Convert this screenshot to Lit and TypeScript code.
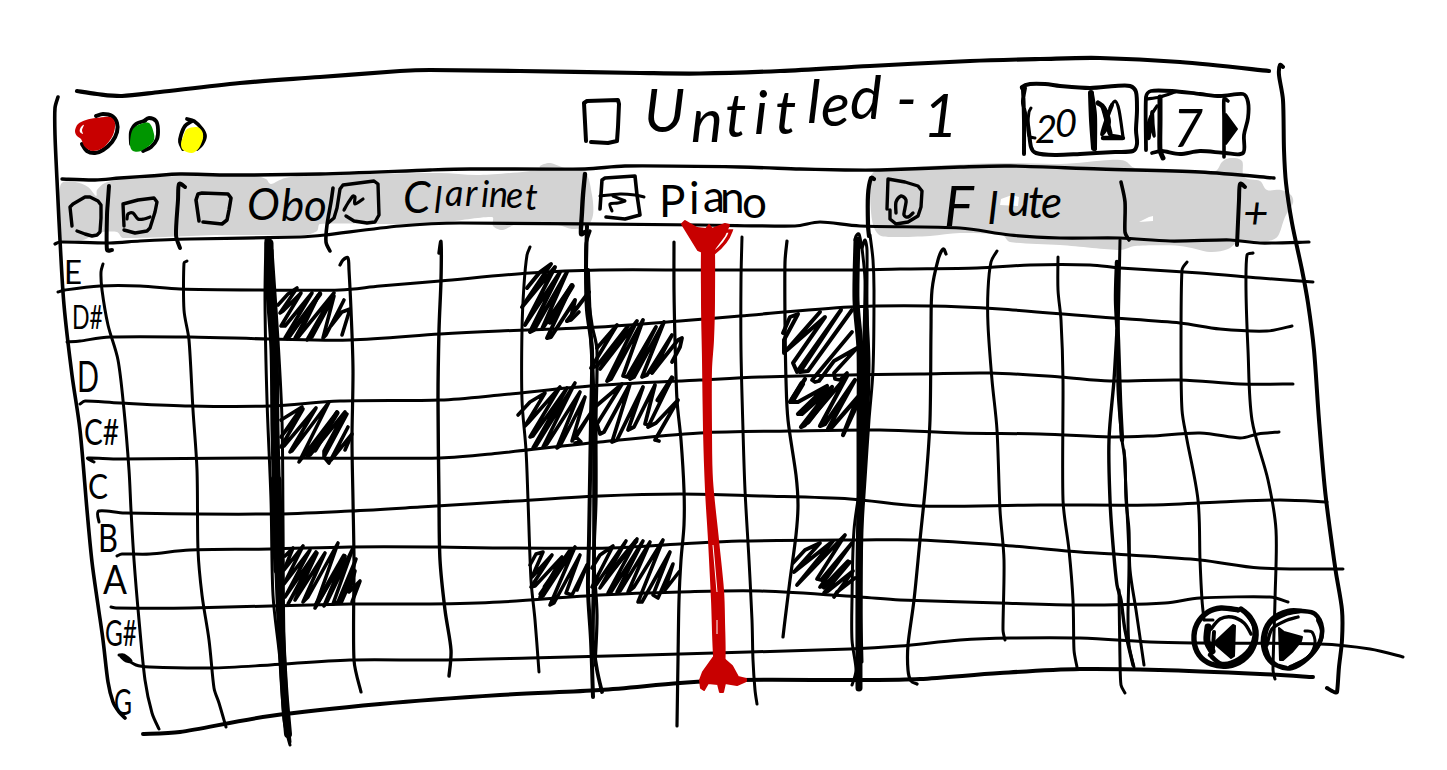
import { LitElement, html, svg, css } from "lit";
import { customElement } from "lit/decorators.js";

type Stroke = [width: number, points: string];

const parse = (points: string): number[][] =>
  points.trim().split(/\s+/).map((p) => p.split(",").map(Number));

/** Smooth pen stroke running through every listed point. */
const curve = (points: string, closed = false): string => {
  const p = parse(points);
  const n = p.length;
  const at = (i: number) => (closed ? p[(i + n) % n] : p[Math.max(0, Math.min(n - 1, i))]);
  let d = `M${p[0][0]} ${p[0][1]}`;
  for (let i = 0; i < (closed ? n : n - 1); i++) {
    const [a, b, c, e] = [at(i - 1), at(i), at(i + 1), at(i + 2)];
    const seg = Math.hypot(c[0] - b[0], c[1] - b[1]);
    const k1 = Math.min(1 / 6, seg / 3 / (Math.hypot(c[0] - a[0], c[1] - a[1]) || 1));
    const k2 = Math.min(1 / 6, seg / 3 / (Math.hypot(e[0] - b[0], e[1] - b[1]) || 1));
    d += `C${b[0] + (c[0] - a[0]) * k1} ${b[1] + (c[1] - a[1]) * k1} ${c[0] - (e[0] - b[0]) * k2} ${c[1] - (e[1] - b[1]) * k2} ${c[0]} ${c[1]}`;
  }
  return closed ? d + "Z" : d;
};

const ink = (strokes: Stroke[]) =>
  strokes.map(([w, p]) => svg`<path class="ink" stroke-width=${w} d=${curve(p)}></path>`);
const blob = (cls: string, points: string) => svg`<path class=${cls} d=${curve(points, true)}></path>`;
const straight = (w: number, points: string) =>
  svg`<polyline class="ink" stroke-width=${w} points=${points}></polyline>`;

const sheet = css`
  :host { display: block; }
  svg { display: block; width: 100%; height: 100%; overflow: visible; }
  .ink { fill: none; stroke: #000; stroke-linecap: round; stroke-linejoin: round; }
  .solid { fill: #000; stroke: #000; stroke-width: 2; stroke-linejoin: round; }
  .wash { fill: #d3d3d3; }
  .paper { fill: #fff; }
  text { font-family: Lato, "Liberation Sans", sans-serif; fill: #000; }
`;

@customElement("title-bar")
class TitleBar extends LitElement {
  static styles = [sheet, css`
    .red { fill: #c80000; }
    .green { fill: #009600; }
    .yellow { fill: #ff0; }
    .title { font-size: 60px; font-style: italic; }
    .number { font-size: 38px; font-style: italic; }
    .seven { font-size: 52px; font-style: italic; }
  `];
  render() {
    return html`<svg viewBox="0 0 1447 160">
      ${ink([
        [4.2, "77,91 97,94 122,96 160,92 240,83 320,77 400,71 430,70 520,71 640,73 700,73.5 780,71 870,66 970,61 1040,59 1100,58 1180,62 1269,71"],
        [4, "96,116 103,114 112,116 117,123 117,132 112,142 103,150 95,153 87,151 82,144"],
        [4, "84,126 81,131 84,136"],
        [3.8, "131,144 131,132 136,124 145,121"],
        [3.8, "144,121 149,118 156,121 158,129 157,139 151,147 143,151"],
        [3.8, "187,119 194,121 202,129 205,136 202,144 197,149"],
        [3.8, "192,121 185,126 181,135 180,142 183,149"],
      ])}
      ${blob("red", "75,131 78,124 86,120 96,118 110,117 115,123 113,135 104,147 93,151 85,147 81,139 77,136")}
      ${blob("paper", "82,126 84,125 82,130 83,134 80,132 80,129")}
      ${blob("green", "132,131 138,125 149,123 154,134 153,142 141,151 133,151 130,145")}
      ${blob("yellow", "183,137 187,129 197,127 202,131 203,138 199,148 192,153 183,150 181,144")}
      ${straight(4, "586,141 584,103 587,101 618,100 619,104 618,127 617,141 608,143 591,142")}
      <text class="title" x="644 691 725 754 775 807 821 850 896 923" y="132 142 137 134 134 123 126 119 120 137">Untitled-1</text>
      ${ink([
        [4, "1024,154 1024,120 1023,90 1022,87 1030,84 1045,84 1060,86 1090,88 1115,86 1130,86 1136,92 1137,110 1136,130 1137,144 1133,151 1115,152 1080,154 1055,155 1036,153 1031,147 1028,125 1023,103 1025,88"],
        [3, "1031,108 1029,112 1028,125 1029,136 1035,138"],
        [6, "1091,93 1092,120 1094,148"],
        [4, "1092,94 1095,115 1095,149"],
        [5, "1098,103 1103,107 1110,133"],
        [4, "1112,105 1107,118 1102,134 1109,122 1104,108 1110,134"],
        [3.2, "1110,108 1115,101 1119,110 1123,137"],
        [4.4, "1103,138 1112,138 1123,138 1112,136"],
        [3.8, "1146,150 1146,97 1151,91 1172,91 1200,94 1220,96 1243,94 1248,102 1248,118 1244,135 1243,153 1225,153 1200,151 1180,154 1162,151 1152,153"],
        [3.2, "1147,99 1160,97 1175,92"],
        [5, "1160,97 1160,120 1160,150 1163,158"],
        [3.4, "1157,106 1151,116 1147,131 1149,138 1152,112 1153,125 1154,136 1151,124 1147,136"],
        [3.6, "1228,101 1224,99 1224,120 1224,157"],
      ])}
      <polygon class="solid" points="1226,114 1237,129 1226,144"></polygon>
      <text class="number" x="1035 1055" y="143 137">20</text>
      <text class="seven" x="1173" y="147">7</text>
    </svg>`;
  }
}

@customElement("instrument-tabs")
class InstrumentTabs extends LitElement {
  static styles = [sheet, css`
    .name { font-size: 36px; }
    .cap { font-size: 44px; }
    .wide { font-size: 44px; }
    .tall { font-size: 56px; }
    .slant { font-style: italic; }
  `];
  render() {
    return html`<svg viewBox="0 160 1447 80">
      ${blob("wash", "61,184 75,182 88,187 96,196 97,190 105,183 125,179 180,176 255,176 266,179 271,184 285,178 310,175 440,173 480,175 540,170 540,166 550,163 565,168 585,172 592,195 593,215 587,226 572,229 558,225 517,224 503,230 493,226 492,217 448,222 445,224 380,224 320,224 317,231 305,235 220,235 123,238 117,232 97,233 83,240 61,240 59,215")}
      ${blob("wash", "870,180 877,170 930,166 1000,163 1060,164 1110,160 1125,161 1135,168 1215,171 1222,162 1230,158 1242,161 1244,177 1260,181 1267,190 1281,190 1291,195 1293,203 1285,217 1278,236 1268,241 1240,241 1228,249 1210,252 1180,246 1135,246 1120,250 1060,245 1010,242 1002,235 960,233 930,236 890,237 878,234 872,220")}
      <polygon class="paper" points="1001,199 1012,195 1019,197 1018,206 1000,205"></polygon>
      <polygon class="paper" points="1139,222 1149,217 1153,216 1153,221"></polygon>
      ${ink([
        [3.4, "62,179 95,180 120,178 150,176 180,174 230,175 320,174 430,170 470,169 585,169 625,166 740,167 800,169 845,170 880,170 960,167 1010,166 1100,169 1200,172 1274,178"],
        [3.2, "55,244 60,242 110,243 140,241 190,239 300,237 325,235 400,226 460,223 700,225 795,226 820,222 860,226 960,228 1010,235 1060,238 1120,238 1170,241 1230,240 1260,243 1309,242"],
        [4, "109,186 108,200 107,215 107,250 112,250"],
        [4, "185,187 179,184 178,200 176,235 180,248"],
        [3.6, "333,188 331,202 327,225 326,242 330,251"],
        [4.4, "585,174 583,195 582,212 581,234 585,232"],
        [4.2, "874,179 871,178 868,195 868,225 869,236"],
        [3.6, "1121,182 1125,202 1125,232 1129,240"],
        [4, "1245,187 1240,184 1239,200 1237,245"],
      ])}
      ${straight(3.4, "72,226 70,207 73,204 85,197 90,197 98,201 101,205 101,218 100,232 97,235 92,236 85,234 77,231")}
      ${straight(3.4, "124,226 123,204 138,200 154,198 157,202 155,212 150,228 147,231 135,233 124,230")}
      ${straight(3.6, "199,221 196,200 198,194 202,193 228,194 231,198 229,210 227,220 222,224 203,222")}
      ${straight(3.4, "328,223 334,218 337,208 340,189 343,185 374,181 378,184 379,215 375,222 367,223 354,221 346,216")}
      ${straight(3.6, "600,209 602,180 605,178 635,176 637,195 640,215 625,219 606,217")}
      ${straight(3.4, "887,209 888,179 905,182 918,186 922,191 921,207 918,216 908,222 896,224 890,219 890,210")}
      ${ink([
        [3.2, "127,219 128,214 133,213 138,219 144,219 150,217"],
        [3.2, "344,210 348,203 353,196 355,197 355,204 363,199"],
        [3, "600,196 620,194 635,195 644,197"],
        [3, "612,211 610,204 618,203 625,201 620,199 613,196"],
        [3.4, "896,213 896,202 901,196 906,200 905,208 904,215 908,217 913,213"],
      ])}
      <text class="wide slant" x="247 281 304" y="220 221 221">Obo</text>
      <text class="name slant" x="403 434 445 465 481 489 506 525" y="213 213 206 206 207 207 208 210"><tspan class="cap">C</tspan>larinet</text>
      <text class="wide" x="659 689 703 720 742" y="217 214 212 213 218">Piano</text>
      <text class="wide slant" x="944 988 1007 1028 1041" y="226 224 216 218 218"><tspan class="tall">F</tspan>lute</text>
      <text class="wide slant" x="1243" y="229">+</text>
    </svg>`;
  }
}

const rows: [string, number, number, number, number][] = [
  ["E", 64, 284, 33, 18],
  ["D#", 72, 329, 33, 31],
  ["D", 77, 392, 43, 22],
  ["C#", 84, 445, 36, 35],
  ["C", 88, 499, 35, 20],
  ["B", 98, 552, 38, 20],
  ["A", 103, 594, 40, 24],
  ["G#", 105, 646, 36, 32],
  ["G", 114, 715, 36, 18],
];

const rules: Stroke[] = [
  [3, "58,292 65,290 100,286 140,286 180,289 260,290 340,290 380,286 440,281 530,273 600,270 700,270 850,270 900,269 977,268 1030,265 1090,265 1120,268 1200,273 1260,278 1313,282"],
  [3, "67,342 80,341 110,337 190,337 270,339 350,340 440,334 500,331 600,327 680,321 740,316 850,307 930,306 1000,309 1100,317 1180,323 1220,329 1267,331 1292,326"],
  [3, "80,404 85,401 120,403 190,406 270,406 340,401 440,400 500,395 590,386 700,380 760,377 850,375 920,374 990,373 1060,377 1110,381 1180,380 1240,384 1293,384"],
  [3, "94,462 88,458 120,459 270,458 440,458 500,453 600,442 700,433 790,431 880,430 960,433 1040,434 1110,437 1150,436 1200,433 1240,438 1258,434 1279,432"],
  [3, "99,522 99,511 125,513 270,514 350,511 420,507 500,502 600,496 680,494 760,496 850,499 920,506 1040,505 1150,505 1220,502 1280,500 1327,502"],
  [3, "117,556 122,554 150,554 190,550 270,549 350,547 430,547 500,548 610,548 680,544 740,541 860,540 920,540 1000,545 1080,552 1130,555 1200,560 1260,568 1343,569"],
  [3, "111,607 116,608 190,608 350,604 430,604 500,602 600,595 680,592 760,591 860,597 900,600 1000,603 1080,605 1165,603 1200,598 1270,597 1288,602"],
  [3, "119,655 124,655 131,661 126,661 121,656 136,665 150,667 210,668 270,665 350,660 440,660 530,658 680,654 850,649 900,646 960,640 1010,638 1080,638 1150,642 1200,643 1320,644 1370,649 1403,657"],
  [4, "143,734 180,732 270,716 380,704 500,695 600,690 680,683 740,680 860,680 920,679 1000,673 1080,669 1160,670 1260,674 1313,677"],
];

const beats: Stroke[] = [
  [3, "103,264 101,272 102,290 108,325 118,360 124,410 129,470 131,510 134,560 139,620 145,680 152,713 159,729"],
  [3, "187,261 184,263 184,310 189,340 193,410 197,470 198,550 202,595 209,640 214,688 219,703 226,727"],
  [3.2, "340,265 343,260 348,258 349,270 351,310 353,370 352,440 353,500 354,560 354,660 361,692"],
  [3.4, "439,253 441,242 441,280 439,330 438,400 439,500 440,560 445,610 451,650 449,676"],
  [3, "530,247 527,255 524,285 522,330 522,400 526,450 528,500 531,580 535,620 539,672"],
  [3.2, "674,242 674,290 675,340 677,400 681,440 684,490 684,525 681,560 679,600 678,660 677,726"],
  [3, "742,237 741,280 741,350 743,430 745,490 749,560 752,620 753,660 755,690 757,704"],
  [3.2, "787,241 785,262 785,320 786,380 788,420 796,475 798,505 796,535 790,580 785,620 783,637"],
  [3.2, "946,254 943,249 938,260 932,290 931,330 930,420 926,480 920,540 914,600 908,645 908,670 911,681 917,684"],
  [3, "997,251 991,262 988,290 988,325 992,380 997,430 1000,510 1004,560 1003,630 1005,640"],
  [3, "1058,257 1058,290 1061,320 1063,380 1063,500 1069,550 1073,600 1074,650 1077,667"],
  [3, "1187,262 1182,270 1181,350 1182,410 1187,440 1198,500 1200,560 1202,600 1204,620"],
  [3, "1253,253 1247,255 1246,290 1248,350 1252,420 1268,480 1276,530 1275,600 1273,670 1275,679"],
];

const bars: Stroke[] = [
  [9, "269,243 270,290 274,350 275,430 277,510"],
  [11, "276,480 277,520 279,570"],
  [8, "278,560 280,610 283,670 285,700 288,734"],
  [3, "266,240 265,300 267,400 271,500 273,595 280,660 284,720 290,745"],
  [3, "272,250 278,340 282,420 283,520 284,640 288,720 290,742"],
  [4, "587,226 586,270 587,310 592,350 591,420 590,480 589,540 588,590 591,640 593,697"],
  [3.2, "590,231 586,245 587,285 592,325 597,350 596,420 596,500 594,560 597,615 595,665"],
  [3.8, "588,270 590,320 593,380 594,460 594,560 593,640 597,670 602,692"],
  [7, "857,240 856,300 860,350 860,430 860,500 859,570 859,688"],
  [3, "855,240 856,236 859,234 861,243 862,248 865,240 867,250 867,310 869,365 867,430 863,480"],
  [3, "870,235 873,260 874,290 873,370 869,420 865,480 862,530 861,610 862,662"],
  [5, "866,310 867,380 865,430 863,480 860,530"],
  [3, "862,248 865,280 864,340 864,400 862,470 854,530 852,600 852,640 856,670 852,685"],
  [3, "1120,240 1119,290 1118,340 1118,390 1122,440 1125,460 1126,500 1129,530 1130,570 1136,610 1144,665"],
  [4.4, "1117,262 1116,300 1118,340 1120,400 1122,440"],
  [3.4, "1117,330 1114,380 1109,440 1110,500 1113,545 1117,585 1121,600 1125,630 1133,665"],
  [3, "1119,590 1120,660 1121,685 1125,693"],
  [3, "1124,450 1127,510 1129,560 1128,615 1129,645 1134,667"],
];

const notes: Stroke[] = [
  [3.6, "278,305 288,294 297,288 280,313 283,311 301,293 281,326 285,326 312,293 285,338 290,336 320,293 295,338 299,336 334,293 307,340 312,337 334,296 323,338 326,335 344,300 331,326 342,312 350,309 342,335"],
  [4.6, "287,338 320,294"],
  [4, "298,337 318,296"],
  [3.6, "281,420 302,407 281,437 303,409 281,447 284,446 316,408 290,452 292,451 329,402 299,462 337,412 307,456 310,455 345,412 324,451 324,457 347,414 324,457 329,463 348,427 331,460 352,434 345,450"],
  [5, "315,450 337,413"],
  [3.6, "285,556 293,548 284,570 303,546 284,584 310,550 285,597 316,552 288,604 317,553 295,600 325,553 303,602 308,597 338,543 315,608 345,556 324,606 327,602 353,548 333,604 338,602 356,559 341,603 355,571 349,592 360,581 352,602"],
  [4.6, "316,605 344,556"],
  [4, "527,288 540,272 551,264 522,307 555,267 525,325 560,272 530,332 534,330 567,272 542,329 572,285 547,338 551,337 575,300 571,318 567,321 589,292"],
  [5.4, "550,322 572,286"],
  [3.6, "567,321 571,320 579,312"],
  [3.8, "597,348 617,325 591,368 597,366 628,326 600,369 637,321 607,381 611,379 643,320 623,376 627,377 656,327 630,379 634,377 664,322 642,377 647,375 672,335 652,373 659,364 678,340 682,338 680,347 672,362"],
  [3.6, "518,415 530,402 545,393 525,426 528,423 560,387 530,437 533,436 567,388 533,448 536,446 575,383 543,447 547,444 580,392 557,448 560,446 585,397 572,441 592,411 576,437 581,442 575,443"],
  [3.8, "595,407 622,384 597,424 600,434 604,432 630,384 612,442 617,440 643,387 628,430 634,427 655,385 645,424 649,425 672,378 648,427 656,423 678,400 655,440 659,441"],
  [5, "658,400 672,378"],
  [4, "783,333 790,317 798,314 784,340 784,353 820,312 787,350 825,317 793,363 797,372 841,310 800,372 808,371 852,310"],
  [3.8, "852,332 812,380 815,382 819,381 834,361 857,348 834,373 835,379 840,380 847,373"],
  [4.2, "805,379 790,402 798,402 827,386 798,414 802,414 832,387 801,427 805,425 847,376 820,426 825,424 855,380 828,429 832,427 858,397 843,435 856,407"],
  [6, "793,399 802,384"],
  [5, "808,422 832,391"],
  [3.6, "530,565 536,554 543,552 532,577 552,555 531,587 535,586 562,557 540,597 543,596 575,547 550,605 554,603 580,555 566,593 572,595 587,565 577,590"],
  [5, "541,594 560,567 545,587 571,550"],
  [3.6, "592,568 600,555 613,546 592,587 596,585 626,541 600,588 637,539 608,593 611,592 643,541 617,592 620,591 650,542 628,592 634,587 663,540 638,602 642,602 670,552 653,595 658,598 673,564 665,590 679,572"],
  [4.8, "614,568 636,541"],
  [3.8, "793,563 805,550 820,543 794,572 833,541 797,585 845,535 817,579 821,580 852,543 820,587 824,586 850,562 824,593 828,591 853,571 834,597 837,592 855,578"],
  [5, "824,587 848,562"],
];

@customElement("piano-roll")
class PianoRoll extends LitElement {
  static styles = [sheet, css`
    .head { fill: #c80000; stroke: #c80000; stroke-width: 2; stroke-linejoin: round; }
    .edge { fill: none; stroke: #c80000; stroke-width: 3.4; stroke-linecap: round; }
    .glint { fill: none; stroke: #fff; stroke-width: 1; }
  `];
  render() {
    return html`<svg viewBox="0 240 1447 530">
      ${ink([
        [3.6, "58,97 55,108 55,135 57,180 60,240 64,305 72,375 80,430 87,510 92,562 98,605 103,640 108,682 113,702 119,712 125,718"],
        [4, "1283,67 1280,65 1279,75 1283,100 1284,150 1286,183 1292,223 1302,270 1308,303 1314,350 1319,420 1325,490 1332,545 1336,573 1342,610 1342,640 1339,667 1337,692 1334,692 1327,688"],
      ])}
      ${ink(rules)}${ink(beats)}${ink(bars)}
      ${notes.map(([w, p]) => straight(w, p))}
      ${rows.map(([label, x, y, size, width]) => svg`<text x=${x} y=${y} font-size=${size} textLength=${width} lengthAdjust="spacingAndGlyphs">${label}</text>`)}
      <path class="head" d=${curve("703,232 713,232 714,300 713,340 711,370 711,430 712,480 718,540 723,590 724,620 724,665 715,665 712,600 709,540 706,490 704,430 703,360 702,300", true)}></path>
      <polygon class="head" points="682,224 685,221 697,228 706,229 709,225 712,229 725,224 729,225 724,236 715,248 713,253 703,252 698,250"></polygon>
      <path class="edge" d="M726 231 L731 231 Q727 243 714 253"></path>
      <polygon class="head" points="713,658 717,654 724,659 732,666 738,677 746,679 746,681 737,685 725,683 723,692 720,692 718,684 708,683 704,690 701,688 700,680 703,672"></polygon>
      <path class="glint" d="M713 545 L717 592 M717 620 L717 634"></path>
      ${ink([
        [5.4, "1238,610 1221,608 1208,612 1197,624 1194,640 1199,655 1211,664 1228,666 1243,660 1253,648 1256,631 1250,617 1241,609"],
        [4.6, "1245,612 1254,626 1252,645 1239,659 1222,664 1210,655"],
        [3, "1205,620 1213,620"],
        [3.4, "1211,629 1220,619 1232,617 1244,623 1251,634"],
        [7, "1208,627 1207,641 1212,651"],
        [4, "1214,632 1213,648"],
        [4.6, "1300,611 1285,614 1270,623 1265,638 1268,656 1278,666 1292,668 1307,659 1319,644 1322,628 1315,614 1302,611 1288,611 1272,619 1264,633 1264,650 1272,663 1286,668"],
        [3.4, "1298,617 1285,621 1272,629 1267,645"],
        [3, "1305,631 1312,632 1315,643 1309,656 1294,665"],
        [4, "1318,620 1322,632 1318,646 1305,660 1290,667"],
      ])}
      <polygon class="solid" points="1233,625 1235,626 1234,656 1231,658 1216,645 1216,641"></polygon>
      <polygon class="solid" points="1279,628 1284,632 1302,637 1301,641 1292,652 1283,660 1280,660"></polygon>
    </svg>`;
  }
}

@customElement("app-root")
class AppRoot extends LitElement {
  static styles = css`
    :host {
      display: grid;
      grid-template-rows: 160px 80px 530px;
      width: 1447px;
      height: 770px;
      overflow: hidden;
      background: #fff;
    }
  `;
  render() {
    return html`<title-bar></title-bar><instrument-tabs></instrument-tabs><piano-roll></piano-roll>`;
  }
}
